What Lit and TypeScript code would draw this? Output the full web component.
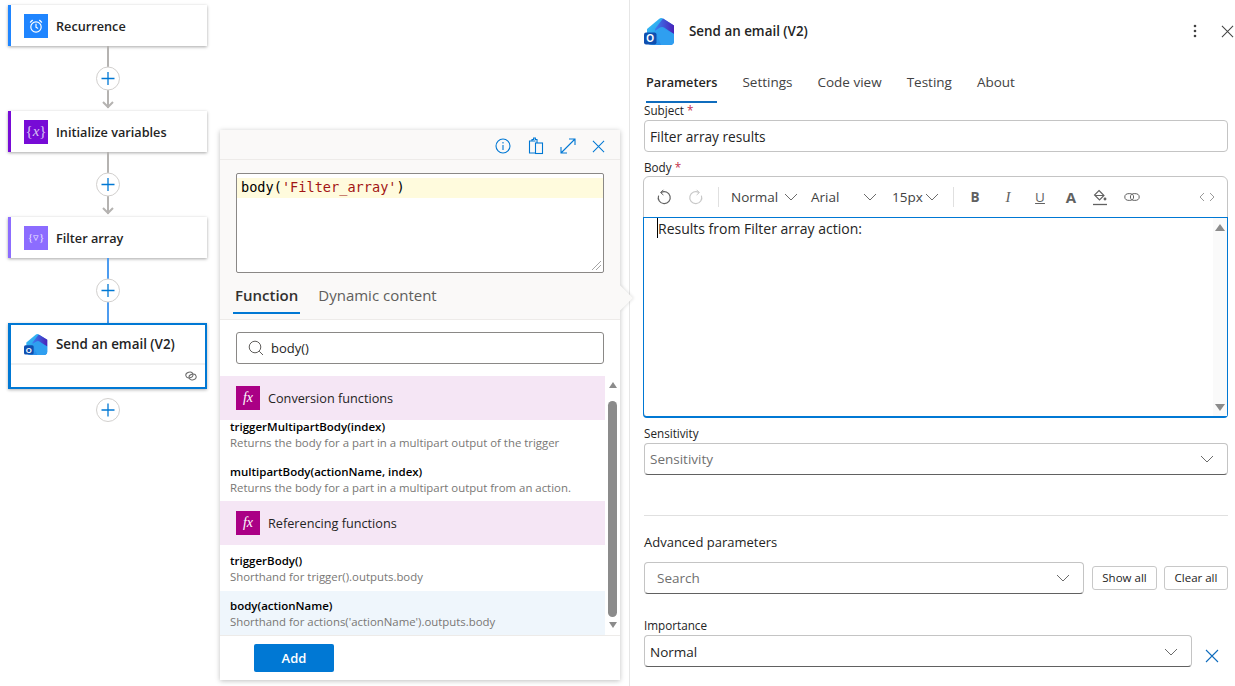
import {LitElement, html, css, svg} from 'lit';
import {customElement} from 'lit/decorators.js';

const outlookIcon = (w: number, h: number) => html`
  <svg width=${w} height=${h} viewBox="0 0 31 29">
    <defs>
      <linearGradient id="olA" x1="0" y1="0" x2="1" y2="1">
        <stop offset="0" stop-color="#36c4f5"></stop>
        <stop offset="1" stop-color="#2378e6"></stop>
      </linearGradient>
      <linearGradient id="olB" x1="0" y1="0" x2="1" y2="0">
        <stop offset="0" stop-color="#3a7ff0"></stop>
        <stop offset="1" stop-color="#4a22b8"></stop>
      </linearGradient>
    </defs>
    <path d="M3 12L15 2Q17 .4 19 1.6L30 8.5V24Q30 28 26 28H8Q3 28 3 24Z" fill="url(#olA)"></path>
    <path d="M11 12L19 1.6L30 8.5V17L20 10.5Q18 9.4 16 10.6L11 14Z" fill="url(#olB)"></path>
    <path d="M12 16L18 11.5Q19 11 20.5 12L30 17V24Q30 28 26 28H17Z" fill="#2f9ff0"></path>
    <rect x="0" y="15.5" width="12.5" height="12" rx="2" fill="#0f4fb0"></rect>
    <text x="6.2" y="25.2" text-anchor="middle" font-family="Liberation Sans" font-weight="700" font-size="10" fill="#fff">O</text>
  </svg>`;

const clockIcon = html`
  <svg width="16" height="16" viewBox="0 0 16 16" fill="none" stroke="#fff" stroke-width="1.2" stroke-linecap="round">
    <circle cx="8" cy="9" r="5.2"></circle>
    <path d="M8 6.2v3l1.7 1M2.4 4.2l2-1.9M13.6 4.2l-2-1.9"></path>
  </svg>`;

const plusIcon = svg`<path d="M-6.5 0H6.5M0 -6.5V6.5" stroke="#0078d4" stroke-width="1.3" fill="none"></path>`;

const chevron = html`
  <svg class="chev" width="14" height="8" viewBox="0 0 14 8" fill="none" stroke="#6b6b6b" stroke-width="1">
    <path d="M1 1l6 6 6-6"></path>
  </svg>`;

const crossIcon = (size: number, color: string) => html`
  <svg width=${size} height=${size} viewBox="0 0 14 14" fill="none" stroke=${color} stroke-width="1.1">
    <path d="M1 1l12 12M13 1L1 13"></path>
  </svg>`;

const cards = [
  {title: 'Recurrence', accent: '#1f85ff', icon: clockIcon},
  {title: 'Initialize variables', accent: '#770bd6', icon: html`<span class="glyph">{<i>x</i>}</span>`},
  {title: 'Filter array', accent: '#8c6cff', icon: html`<span class="glyph small">{▿}</span>`},
];

@customElement('flow-canvas')
export class FlowCanvas extends LitElement {
  static override styles = css`
    :host {
      display: flex;
      flex-direction: column;
      width: 199px;
      margin-left: 8px;
      padding-top: 5px;
      font-family: 'Open Sans', sans-serif;
    }
    .card {
      display: flex;
      align-items: center;
      height: 41px;
      box-sizing: border-box;
      background: #fff;
      border-left: 3px solid;
      box-shadow: 0 1px 3px rgba(0, 0, 0, 0.35);
      padding-left: 13px;
      gap: 8px;
      font-size: 12.7px;
      font-weight: 600;
      color: #242424;
    }
    .card-title {
      padding-top: 1px;
    }
    .tile {
      width: 24px;
      height: 24px;
      display: flex;
      align-items: center;
      justify-content: center;
    }
    .glyph {
      color: #d9c4f3;
      font-family: 'Liberation Serif', serif;
      font-size: 15px;
      font-weight: 400;
      white-space: nowrap;
    }
    .glyph.small {
      font-size: 11px;
      color: #ece6ff;
    }
    .selected {
      height: 66px;
      box-sizing: border-box;
      border: 2px solid #0078d4;
      border-left-width: 3px;
      box-shadow: 0 1px 3px rgba(0, 0, 0, 0.3);
      background: #fff;
      display: flex;
      flex-direction: column;
      font-size: 13.4px;
      font-weight: 600;
      color: #242424;
    }
    .selected .top {
      height: 38px;
      display: flex;
      align-items: center;
      padding-left: 13px;
      gap: 8px;
      border-bottom: 2px solid #f0f0f0;
    }
    .selected .foot {
      flex: 1;
      display: flex;
      align-items: center;
      justify-content: flex-end;
      padding-right: 8px;
    }
    svg.link {
      display: block;
    }
  `;

  private connector(color: string, arrow: boolean) {
    return html`<svg class="link" width="199" height="65" viewBox="0 0 199 65">
      <path d="M100 0V${arrow ? 62 : 65}" stroke=${color} stroke-width="2" fill="none"></path>
      ${arrow ? svg`<path d="M95 56l5 5 5-5" stroke=${color} stroke-width="2" fill="none"></path>` : ''}
      <g transform="translate(100 32.5)">
        <circle r="11.5" fill="#fff" stroke="#d2d0ce" stroke-width="1"></circle>
        ${plusIcon}
      </g>
    </svg>`;
  }

  override render() {
    return html`
      ${cards.map((c, i) => html`
        <div class="card" style="border-left-color:${c.accent}">
          <span class="tile" style="background:${c.accent}">${c.icon}</span>
          <span class="card-title">${c.title}</span>
        </div>
        ${this.connector(i === 2 ? '#4d9cf0' : '#b5b3b1', i !== 2)}
      `)}
      <div class="selected">
        <div class="top">${outlookIcon(24, 23)}<span>Send an email (V2)</span></div>
        <div class="foot">
          <svg width="12" height="10" viewBox="0 0 12 10" fill="none" stroke="#6a6a6a" stroke-width="1">
            <ellipse cx="4.4" cy="4" rx="3.6" ry="2.8" transform="rotate(-15 4.4 4)"></ellipse>
            <ellipse cx="7.6" cy="6" rx="3.6" ry="2.8" transform="rotate(-15 7.6 6)"></ellipse>
          </svg>
        </div>
      </div>
      <svg class="link" width="199" height="42" viewBox="0 0 199 42">
        <g transform="translate(100 21)">
          <circle r="11.5" fill="#fff" stroke="#d2d0ce" stroke-width="1"></circle>
          ${plusIcon}
        </g>
      </svg>
    `;
  }
}

const groups = [
  {
    title: 'Conversion functions',
    items: [
      {name: 'triggerMultipartBody(index)', desc: 'Returns the body for a part in a multipart output of the trigger'},
      {name: 'multipartBody(actionName, index)', desc: 'Returns the body for a part in a multipart output from an action.'},
    ],
  },
  {
    title: 'Referencing functions',
    items: [
      {name: 'triggerBody()', desc: 'Shorthand for trigger().outputs.body'},
      {name: 'body(actionName)', desc: "Shorthand for actions('actionName').outputs.body", active: true},
    ],
  },
];

@customElement('expression-popup')
export class ExpressionPopup extends LitElement {
  static override styles = css`
    :host {
      position: absolute;
      left: 220px;
      top: 130px;
      width: 400px;
      height: 550px;
      display: flex;
      flex-direction: column;
      background: #fff;
      box-shadow: 0 1px 5px rgba(0, 0, 0, 0.25);
      font-family: 'Open Sans', sans-serif;
      color: #242424;
    }
    .beak {
      position: absolute;
      left: 391px;
      top: 159px;
      width: 18px;
      height: 18px;
      background: #faf9f8;
      transform: rotate(45deg);
      box-shadow: 1px -1px 3px rgba(0, 0, 0, 0.1);
    }
    .head {
      position: relative;
      z-index: 1;
      background: #faf9f8;
      height: 190px;
      box-sizing: border-box;
      border-bottom: 1px solid #edebe9;
      display: flex;
      flex-direction: column;
    }
    .actions {
      height: 30px;
      box-sizing: border-box;
      border-bottom: 1px solid #edebe9;
      display: flex;
      align-items: center;
      justify-content: flex-end;
      gap: 16px;
      padding: 3px 15px 0 0;
    }
    .expr {
      margin: 13px 16px 0;
      height: 100px;
      box-sizing: border-box;
      background: #fff;
      border: 1px solid #8a8886;
      border-radius: 2px;
      padding-top: 4px;
      position: relative;
    }
    .line {
      height: 20px;
      line-height: 19px;
      background: #fffbdd;
      padding-left: 4px;
      font-family: 'DejaVu Sans Mono', monospace;
      font-size: 13.6px;
      color: #000;
    }
    .line span {
      color: #a31515;
    }
    .grip {
      position: absolute;
      right: 2px;
      bottom: 2px;
    }
    .tabs {
      display: flex;
      gap: 16px;
      margin: 11px 0 0 13px;
      font-size: 15px;
    }
    .tabs .tab {
      padding: 0 2px 5px;
      color: #605e5c;
      line-height: 23px;
    }
    .tabs .on {
      font-weight: 600;
      color: #323130;
      border-bottom: 2px solid #0078d4;
    }
    .search {
      margin: 12px 16px;
      height: 32px;
      box-sizing: border-box;
      border: 1px solid #8a8886;
      border-radius: 3px;
      display: flex;
      align-items: center;
      padding-left: 11px;
      gap: 7px;
      font-size: 13px;
    }
    .body {
      flex: 1;
      min-height: 0;
      display: flex;
      overflow: hidden;
    }
    .list {
      width: 385px;
    }
    .ghead {
      height: 44px;
      background: #f5e6f5;
      display: flex;
      align-items: center;
      padding-left: 16px;
      gap: 8px;
      font-size: 12.7px;
      font-weight: 500;
    }
    .fx {
      width: 24px;
      height: 24px;
      background: #aa0085;
      color: #fff;
      font-family: 'Liberation Serif', serif;
      font-style: italic;
      font-size: 14px;
      line-height: 24px;
      text-align: center;
    }
    .item {
      box-sizing: border-box;
      height: 45px;
      padding: 2px 10px 0;
      display: flex;
      flex-direction: column;
      justify-content: center;
    }
    .ghead + .item {
      height: 37px;
      margin-top: -1px;
      padding-top: 0;
      justify-content: flex-start;
    }
    .second .item {
      height: 44px;
    }
    .second .ghead + .item {
      height: 46px;
      margin-top: 0;
      padding-top: 2px;
      justify-content: center;
    }
    .item.active {
      background: #eff6fc;
    }
    .name {
      font-size: 11.5px;
      font-weight: 600;
      line-height: 16px;
      color: #000;
    }
    .desc {
      font-size: 11.4px;
      line-height: 16px;
      color: #797775;
      white-space: nowrap;
    }
    .bar {
      width: 15px;
      display: flex;
      flex-direction: column;
      align-items: center;
      padding-top: 6px;
      box-sizing: border-box;
    }
    .thumb {
      width: 9px;
      height: 216px;
      margin: 13px 0 5px;
      border-radius: 5px;
      background: #8b8b8b;
    }
    .up,
    .down {
      width: 0;
      height: 0;
      border-left: 4px solid transparent;
      border-right: 4px solid transparent;
    }
    .up {
      border-bottom: 6px solid #8b8b8b;
    }
    .down {
      border-top: 6px solid #8b8b8b;
    }
    .foot {
      height: 45px;
      box-sizing: border-box;
      border-top: 1px solid #edebe9;
      padding: 8px 0 0 34px;
    }
    .add {
      width: 80px;
      height: 28px;
      background: #0078d4;
      color: #fff;
      border-radius: 2px;
      font-size: 13px;
      font-weight: 600;
      display: flex;
      align-items: center;
      justify-content: center;
    }
  `;

  override render() {
    return html`
      <div class="beak"></div>
      <div class="head">
        <div class="actions">
          <svg width="18" height="18" viewBox="0 0 18 18" fill="none" stroke="#0078d4" stroke-width="1.1">
            <circle cx="9" cy="9" r="7"></circle>
            <path d="M9 8v5M9 5v1.4"></path>
          </svg>
          <svg width="16" height="18" viewBox="0 0 16 18" fill="none" stroke="#0078d4" stroke-width="1.1">
            <path d="M7.5 4H1.5v12h6M4 4V2.5h1.6V1h1.8v1.5H9V6"></path>
            <rect x="7.5" y="6" width="7" height="10.5"></rect>
          </svg>
          <svg width="16" height="16" viewBox="0 0 16 16" fill="none" stroke="#0078d4" stroke-width="1.1">
            <path d="M1 15L15 1M9 1h6v6M1 9v6h6"></path>
          </svg>
          ${crossIcon(13, '#0078d4')}
        </div>
        <div class="expr">
          <div class="line">body(<span>'Filter_array'</span>)</div>
          <svg class="grip" width="9" height="9" viewBox="0 0 9 9" stroke="#a5a5a5" stroke-width="1">
            <path d="M0 9L9 0M4 9l5-5"></path>
          </svg>
        </div>
        <div class="tabs">
          <div class="tab on">Function</div>
          <div class="tab">Dynamic content</div>
        </div>
      </div>
      <div class="search">
        <svg width="16" height="16" viewBox="0 0 16 16" fill="none" stroke="#605e5c" stroke-width="1">
          <circle cx="7" cy="7" r="5.8"></circle>
          <path d="M11.2 11.2L15 15"></path>
        </svg>
        <span>body()</span>
      </div>
      <div class="body">
        <div class="list">
          ${groups.map((g, i) => html`
            <div class=${i === 1 ? 'second' : ''}>
              <div class="ghead"><span class="fx">fx</span><span>${g.title}</span></div>
              ${g.items.map(it => html`
                <div class="item ${it.active ? 'active' : ''}">
                  <div class="name">${it.name}</div>
                  <div class="desc">${it.desc}</div>
                </div>
              `)}
            </div>
          `)}
        </div>
        <div class="bar">
          <div class="up"></div>
          <div class="thumb"></div>
          <div class="down"></div>
        </div>
      </div>
      <div class="foot"><div class="add">Add</div></div>
    `;
  }
}

@customElement('detail-panel')
export class DetailPanel extends LitElement {
  static override styles = css`
    :host {
      display: flex;
      flex-direction: column;
      flex: 1;
      padding: 0 7px 0 14px;
      box-sizing: border-box;
      font-family: 'Open Sans', sans-serif;
      color: #242424;
      overflow: hidden;
    }
    .title {
      height: 62px;
      display: flex;
      align-items: center;
      font-size: 13.4px;
      font-weight: 600;
      gap: 14px;
    }
    .title .grow {
      flex: 1;
    }
    .title .tools {
      display: flex;
      align-items: center;
      gap: 24px;
      padding-right: 1px;
      margin-right: -7px;
    }
    .tabs {
      display: flex;
      gap: 25px;
      padding-left: 2px;
      font-size: 13.5px;
      color: #424242;
      height: 41px;
    }
    .tabs .tab {
      height: 39px;
      line-height: 41px;
      white-space: nowrap;
    }
    .tabs .on {
      font-size: 12.7px;
      font-weight: 600;
      color: #242424;
      border-bottom: 2px solid #0f6cbd;
    }
    .label {
      font-size: 11.7px;
      font-weight: 500;
      line-height: 15px;
      margin-bottom: 1px;
    }
    .label b {
      color: #c4314b;
      font-weight: 400;
    }
    .label.wide {
      margin-bottom: 2px;
    }
    .input {
      height: 32px;
      box-sizing: border-box;
      border: 1px solid #c4c4c4;
      border-radius: 4px;
      display: flex;
      align-items: center;
      justify-content: space-between;
      padding: 0 5px;
      font-size: 13.5px;
    }
    .lift {
      padding-top: 1px;
    }
    .subject {
      font-size: 13.7px;
    }
    .sel {
      border-bottom: 1px solid #616161;
      padding-right: 13px;
    }
    .ph {
      color: #707070;
    }
    .editor {
      height: 242px;
      box-sizing: border-box;
      margin-left: -1px;
      border: 1px solid #c4c4c4;
      border-radius: 6px;
      display: flex;
      flex-direction: column;
    }
    .bar {
      height: 40px;
      flex: none;
      box-sizing: border-box;
      display: flex;
      align-items: center;
      padding-left: 4px;
      font-size: 13.5px;
      color: #424242;
    }
    .btn {
      width: 32px;
      display: flex;
      justify-content: center;
      font-weight: 700;
      color: #616161;
    }
    .btn.italic {
      margin-left: 1px;
      font-weight: 400;
      font-style: italic;
      font-family: 'Liberation Serif', serif;
      font-size: 15px;
    }
    .btn.under {
      font-weight: 400;
      text-decoration: underline;
    }
    .btn.letter {
      margin-left: -1px;
      font-size: 15px;
    }
    .btn.fill {
      margin-left: -3px;
    }
    .btn.code {
      margin-left: auto;
      margin-right: 4px;
    }
    .sep {
      width: 1px;
      height: 20px;
      background: #e0e0e0;
    }
    .sep.first {
      margin: 0 12px 0 6px;
    }
    .sep.second {
      margin: 0 5px 0 14px;
    }
    .drop {
      display: flex;
      align-items: center;
      justify-content: space-between;
    }
    .drop.style {
      width: 67px;
    }
    .drop.family {
      width: 66px;
      margin-left: 13px;
    }
    .drop.size {
      width: 47px;
      margin-left: 15px;
    }
    .area {
      flex: 1;
      margin: 0 -1px -1px;
      border: 1px solid #0078d4;
      border-bottom-width: 2px;
      border-radius: 0 0 4px 4px;
      display: flex;
      justify-content: space-between;
      font-size: 14px;
      color: #242424;
    }
    .text {
      margin: 0 0 0 13px;
      padding-top: 1px;
      height: 19px;
      line-height: 19px;
      border-left: 1px solid #000;
      white-space: nowrap;
    }
    .rail {
      width: 14px;
      background: #fafafa;
      display: flex;
      flex-direction: column;
      align-items: center;
      justify-content: space-between;
      padding: 6px 0 5px;
      box-sizing: border-box;
    }
    .up,
    .down {
      width: 0;
      height: 0;
      border-left: 5px solid transparent;
      border-right: 5px solid transparent;
    }
    .up {
      border-bottom: 7px solid #8b8b8b;
    }
    .down {
      border-top: 7px solid #8b8b8b;
    }
    .rule {
      height: 1px;
      background: #e0e0e0;
      margin-top: 40px;
    }
    .adv {
      font-size: 13px;
      line-height: 18px;
      margin: 17px 0 11px;
    }
    .row {
      display: flex;
      align-items: center;
      gap: 8px;
    }
    .row .input {
      flex: 1;
    }
    .row.tight {
      gap: 0;
    }
    .search {
      padding-left: 12px;
    }
    .mini {
      height: 24px;
      box-sizing: border-box;
      border: 1px solid #c8c8c8;
      border-radius: 3px;
      font-size: 11.5px;
      line-height: 22px;
      text-align: center;
    }
    .show {
      width: 65px;
    }
    .clear {
      width: 64px;
      margin-left: -1px;
    }
    .mt {
      margin-top: 8px;
    }
    .imp {
      margin-top: 24px;
    }
    .x {
      width: 36px;
      flex: none;
      padding: 12px 0 0 13px;
      box-sizing: border-box;
    }
  `;

  override render() {
    return html`
      <div class="title">
        ${outlookIcon(31, 29)}
        <span class="grow">Send an email (V2)</span>
        <span class="tools">
          <svg width="4" height="14" viewBox="0 0 4 14" fill="#424242">
            <circle cx="2" cy="2" r="1.3"></circle>
            <circle cx="2" cy="7" r="1.3"></circle>
            <circle cx="2" cy="12" r="1.3"></circle>
          </svg>
          ${crossIcon(13, '#424242')}
        </span>
      </div>
      <div class="tabs">
        <div class="tab on">Parameters</div>
        <div class="tab">Settings</div>
        <div class="tab">Code view</div>
        <div class="tab">Testing</div>
        <div class="tab">About</div>
      </div>
      <div class="label wide">Subject <b>*</b></div>
      <div class="input lift subject">Filter array results</div>
      <div class="label mt">Body <b>*</b></div>
      <div class="editor">
        <div class="bar">
          <span class="btn">
            <svg width="16" height="16" viewBox="0 0 16 16" fill="none" stroke="#616161" stroke-width="1.2">
              <path d="M5 3.6a6 6 0 1 1-2.4 3"></path>
              <path d="M7.4 .8L4.6 3.6l2.8 2.4" stroke-width="1"></path>
            </svg>
          </span>
          <span class="btn">
            <svg width="16" height="16" viewBox="0 0 16 16" fill="none" stroke="#c8c8c8" stroke-width="1.2">
              <path d="M11 3.6a6 6 0 1 0 2.4 3"></path>
              <path d="M8.6 .8l2.8 2.8L8.6 6" stroke-width="1"></path>
            </svg>
          </span>
          <span class="sep first"></span>
          <span class="drop style">Normal ${chevron}</span>
          <span class="drop family">Arial ${chevron}</span>
          <span class="drop size">15px ${chevron}</span>
          <span class="sep second"></span>
          <span class="btn">B</span>
          <span class="btn italic">I</span>
          <span class="btn under">U</span>
          <span class="btn letter">A</span>
          <span class="btn fill">
            <svg width="16" height="17" viewBox="0 0 16 17" fill="none" stroke="#616161" stroke-width="1.1">
              <path d="M7 1.5l5 5-4.5 4.5-5-5zM3 6.5h9"></path>
              <circle cx="13" cy="10" r=".9" fill="#616161"></circle>
              <path d="M1 15.5h14" stroke-width="1.3"></path>
            </svg>
          </span>
          <span class="btn">
            <svg width="16" height="10" viewBox="0 0 16 10" fill="none" stroke="#616161" stroke-width="1">
              <ellipse cx="5.2" cy="5" rx="4.4" ry="3.4"></ellipse>
              <ellipse cx="10.8" cy="5" rx="4.4" ry="3.4"></ellipse>
            </svg>
          </span>
          <span class="btn code">
            <svg width="16" height="10" viewBox="0 0 16 10" fill="none" stroke="#9a9a9a" stroke-width="1">
              <path d="M5 1L1 5l4 4M11 1l4 4-4 4"></path>
            </svg>
          </span>
        </div>
        <div class="area">
          <div class="text">Results from Filter array action:</div>
          <div class="rail"><div class="up"></div><div class="down"></div></div>
        </div>
      </div>
      <div class="label mt wide">Sensitivity</div>
      <div class="input sel"><span class="ph">Sensitivity</span>${chevron}</div>
      <div class="rule"></div>
      <div class="adv">Advanced parameters</div>
      <div class="row">
        <div class="input sel search"><span class="ph">Search</span>${chevron}</div>
        <div class="mini show">Show all</div>
        <div class="mini clear">Clear all</div>
      </div>
      <div class="label imp">Importance</div>
      <div class="row tight">
        <div class="input sel lift">Normal ${chevron}</div>
        <div class="x">${crossIcon(14, '#0f6cbd')}</div>
      </div>
    `;
  }
}

@customElement('app-root')
export class AppRoot extends LitElement {
  static override styles = css`
    :host {
      display: flex;
      width: 1235px;
      height: 686px;
      overflow: hidden;
      background: #fff;
    }
    .canvas {
      position: relative;
      width: 630px;
      flex: none;
      box-sizing: border-box;
      border-right: 1px solid #e6e6e6;
    }
  `;

  override render() {
    return html`
      <div class="canvas">
        <flow-canvas></flow-canvas>
        <expression-popup></expression-popup>
      </div>
      <detail-panel></detail-panel>
    `;
  }
}
